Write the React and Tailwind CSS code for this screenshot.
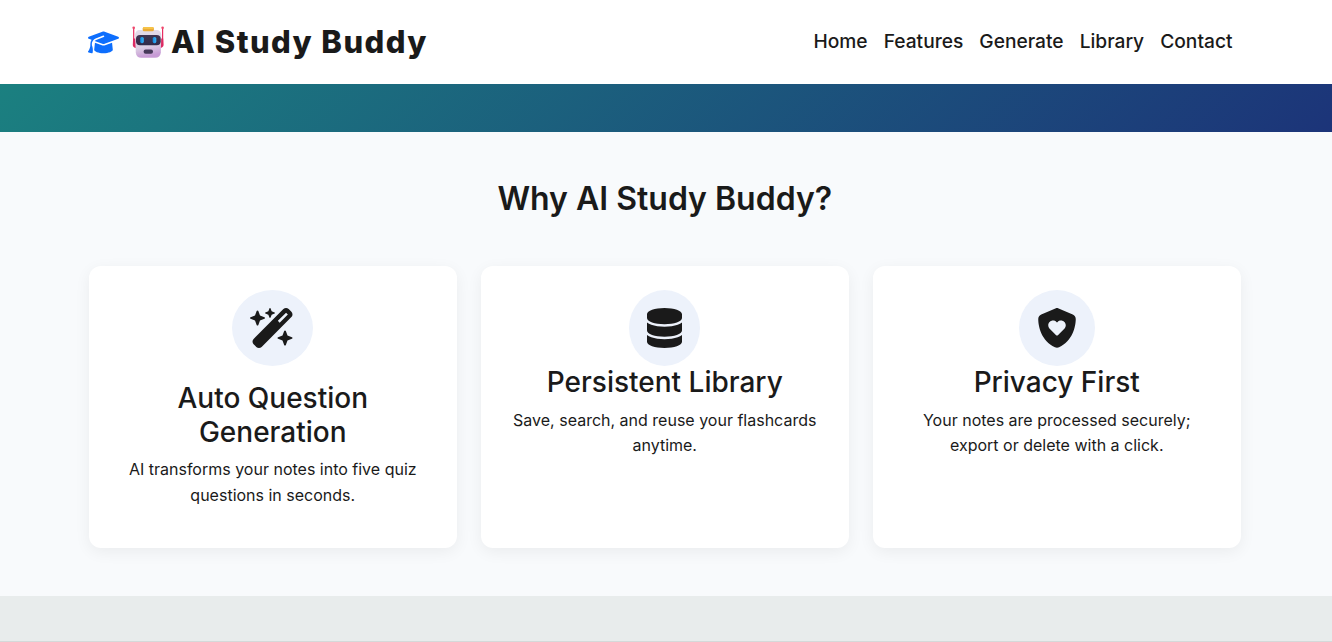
import { FaGraduationCap, FaWandMagicSparkles, FaDatabase, FaShieldHeart } from "react-icons/fa6";

function Robot() {
  return (
    <svg viewBox="0 0 32 32" className="h-8 w-8 shrink-0" aria-hidden="true">
      <defs>
        <linearGradient id="head" x1="0" y1="0" x2="0.2" y2="1">
          <stop offset="0" stopColor="#e4ddeb" />
          <stop offset="0.65" stopColor="#dccfe3" />
          <stop offset="1" stopColor="#c79bd5" />
        </linearGradient>
        <linearGradient id="eye" x1="0" y1="0" x2="1" y2="0">
          <stop offset="0" stopColor="#1686dd" />
          <stop offset="1" stopColor="#36b5f6" />
        </linearGradient>
        <linearGradient id="visor" x1="0" y1="0" x2="0" y2="1">
          <stop offset="0" stopColor="#403451" />
          <stop offset="1" stopColor="#302b49" />
        </linearGradient>
      </defs>
      <path d="M1.7 1.5v18M30.6 1.5v18" stroke="#e82d62" strokeWidth="1.2" />
      <circle cx="1.7" cy="1.7" r="1.3" fill="#ef476b" />
      <circle cx="30.6" cy="1.7" r="1.3" fill="#ef476b" />
      <path d="M1.1 12.5H4V22C2.2 21.8 .8 20.8.8 19ZM28 12.5h3.2l.3 6.5c0 1.8-1.4 2.8-3.5 3Z" fill="#dc2b63" />
      <path d="M8 4H24C27.5 4 29.3 6 29.3 9.5L28.8 26.5C28.5 30 26.5 31.8 23 31.8H9.5C6 31.8 4 30 3.8 26.5L3 9.5C3 6 4.8 4 8 4Z" fill="url(#head)" />
      <rect x="10.7" y="1" width="11.2" height="4.3" rx="1.5" fill="#e9aa37" />
      <rect x="11" y="1" width="10.6" height="2" rx="1" fill="#f6c348" />
      <rect x="4" y="9" width="24.7" height="10.3" rx="4" fill="url(#visor)" />
      <rect x="8.2" y="11" width="3.6" height="6.2" rx="1.6" fill="url(#eye)" />
      <rect x="20.7" y="11" width="3.6" height="6.2" rx="1.6" fill="url(#eye)" />
      <rect x="11.6" y="23.5" width="9.4" height="4.2" rx="2" fill="#463959" />
    </svg>
  );
}

const links = ["Home", "Features", "Generate", "Library", "Contact"];

const cards = [
  {
    Icon: FaWandMagicSparkles,
    badge: "w-[81px] mb-4",
    icon: "w-[45px]",
    title: ["Auto Question", "Generation"],
    text: ["AI transforms your notes into five quiz", "questions in seconds."],
  },
  {
    Icon: FaDatabase,
    badge: "w-[71px]",
    icon: "w-[35px]",
    title: ["Persistent Library"],
    text: ["Save, search, and reuse your flashcards", "anytime."],
  },
  {
    Icon: FaShieldHeart,
    badge: "w-[76px]",
    icon: "w-10",
    title: ["Privacy First"],
    text: ["Your notes are processed securely;", "export or delete with a click."],
  },
];

function Card({ Icon, badge, icon, title, text }) {
  return (
    <article className="flex h-[282px] flex-col items-center rounded-xl bg-white pt-6 text-center shadow-[0_4px_16px_rgba(0,0,0,0.06)]">
      <div className={`flex h-[76px] shrink-0 items-center justify-center rounded-[50%] bg-[#edf2fb] ${badge}`}>
        <Icon className={`h-10 ${icon}`} />
      </div>
      <h3 className="mb-2 text-[28px] leading-[33.6px] font-medium">
        {title.map((line) => <span key={line} className="block whitespace-nowrap">{line}</span>)}
      </h3>
      <p className="text-base leading-[25.6px]">
        {text.map((line) => <span key={line} className="block whitespace-nowrap">{line}</span>)}
      </p>
    </article>
  );
}

export default function App() {
  return (
    <div className="h-[642px] overflow-hidden bg-[#f8fafc] font-['Inter',sans-serif] text-[#1a1a1a]">
      <header className="h-[84px] w-full bg-white">
        <div className="flex h-full w-[1329.5px] items-center justify-between pr-[97px] pb-px pl-[88px]">
          <a className="flex items-center">
            <FaGraduationCap className="mt-0.5 mr-[13px] h-[24.8px] w-[31px] text-[#0d6efd]" />
            <Robot />
            <span className="ml-[7px] text-[31px] leading-[48px] font-extrabold tracking-[1.42px] whitespace-nowrap">AI Study Buddy</span>
          </a>
          <nav className="flex gap-4 pb-px text-[19.2px] leading-7 font-medium">
            {links.map((link) => <a key={link}>{link}</a>)}
          </nav>
        </div>
      </header>
      <div className="h-12 bg-[linear-gradient(135deg,#1b8080,#1c3479)]" />
      <main className="h-[464px] w-[1329.5px] pt-12">
        <h2 className="text-center text-[32px] leading-[38.4px] font-semibold">Why AI Study Buddy?</h2>
        <div className="mx-auto mt-[47.6px] grid w-[1152px] grid-cols-3 gap-6">
          {cards.map((card) => <Card key={card.title[0]} {...card} />)}
        </div>
      </main>
      <footer className="h-[46px] bg-[#e8ecec] pt-[45px]">
        <div className="h-px bg-[#d5d9d9]" />
      </footer>
    </div>
  );
}
